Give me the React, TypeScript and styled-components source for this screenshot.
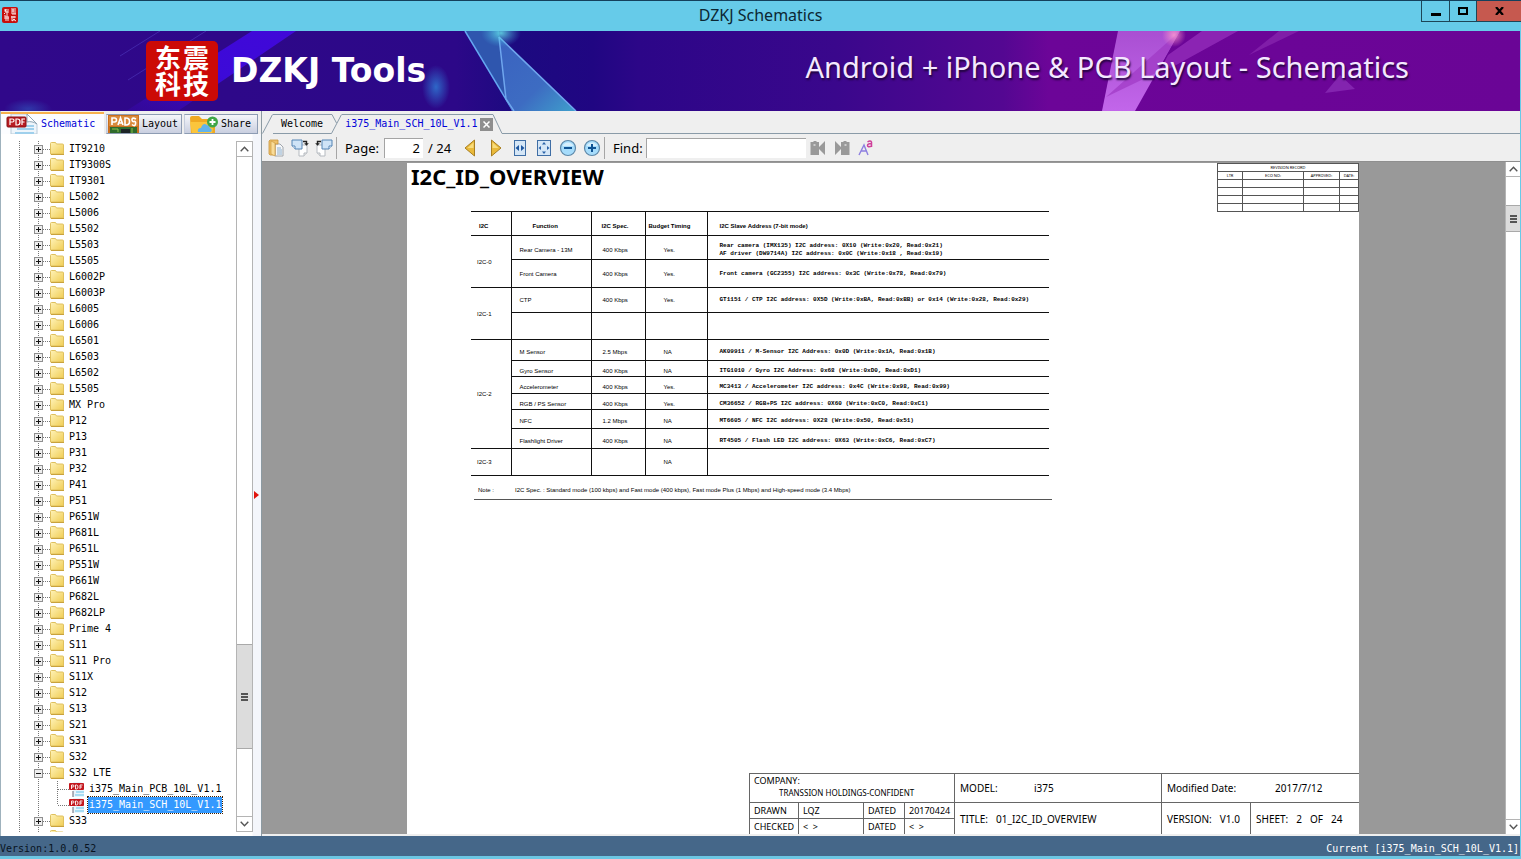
import React from "react";
import styled, { createGlobalStyle, css } from "styled-components";

const mono = `"DejaVu Sans Mono", "Liberation Mono", monospace`;
const ui = `"Noto Sans", "Open Sans", sans-serif`;
const sheet = `"Liberation Sans", Arial, sans-serif`;

const GlobalStyle = createGlobalStyle`
  *, *::before, *::after { box-sizing: border-box; }
  body { margin: 0; font-family: ${ui}; color: #000; background: #66cbe9; }
  button, input { font: inherit; color: inherit; padding: 0; margin: 0; border: 0; border-radius: 0; }
  button { background: none; }
  svg { display: block; flex: none; }
  ul { list-style: none; margin: 0; padding: 0; }
  h1, h2, p { margin: 0; }
`;

const Window = styled.div`
  display: flex;
  flex-direction: column;
  height: 100vh;
  border-top: 1px solid #14405c;
  border-bottom: 3px solid #6cc6e2;
`;

/* ---------- title bar ---------- */

const TitleBar = styled.header`
  display: grid;
  grid-template-columns: 1fr auto 1fr;
  height: 30px;
  flex: none;
  background: #66cbe9;
`;

const AppIcon = styled.div`
  padding: 6px 2px;
`;

const WindowTitle = styled.h1`
  font-size: 16px;
  line-height: 28px;
  font-weight: 400;
  color: #0c2733;
`;

const WindowControls = styled.div`
  display: flex;
  justify-self: end;
  height: 21px;
  border: 1px solid #1d4557;
  border-top: 0;
  border-right: 0;
`;

const WindowButton = styled.button<{ $wide?: boolean }>`
  display: flex;
  align-items: center;
  justify-content: center;
  width: ${(p) => (p.$wide ? 45 : 27)}px;
  background: ${(p) => (p.$wide ? "#c6594f" : "transparent")};

  & + & {
    border-left: 1px solid #1d4557;
  }
`;

/* ---------- banner ---------- */

const Banner = styled.div`
  position: relative;
  display: flex;
  align-items: center;
  justify-content: space-between;
  height: 80px;
  flex: none;
  margin-right: 1px;
  padding: 0 111px 0 146px;
  background: #30088a;
  overflow: hidden;
`;

const BannerArt = styled.svg`
  position: absolute;
  inset: 0;
  width: 100%;
  height: 100%;
`;

const Brand = styled.div`
  position: relative;
  display: flex;
  align-items: center;
  gap: 13px;
`;

const Seal = styled.div`
  display: grid;
  grid-template-columns: 28px 28px;
  grid-auto-rows: 26px;
  justify-content: center;
  width: 72px;
  height: 60px;
  padding: 3px 0;
  border-radius: 5px;
  background: #cc0a06;
  color: #fff;
  font-family: "Noto Sans CJK SC", sans-serif;
  font-size: 26px;
  line-height: 26px;
  font-weight: 700;
  text-align: center;
`;

const BrandName = styled.span`
  color: #fff;
  font-family: "DejaVu Sans", Verdana, sans-serif;
  font-size: 33px;
  line-height: 40px;
  font-weight: 700;
`;

const Tagline = styled.span`
  position: relative;
  color: #f4e8ff;
  font-size: 29px;
  line-height: 40px;
  margin-bottom: 8px;
  text-shadow: 1px 2px 2px #20043c;
`;

/* ---------- body ---------- */

const Body = styled.div`
  display: flex;
  flex: 1;
  min-height: 0;
  margin-right: 1px;
  background: #efefef;
`;

const Sidebar = styled.aside`
  display: flex;
  flex-direction: column;
  width: 262px;
  flex: none;
  padding-top: 1px;
  border-left: 1px solid #9fb2bd;
  border-right: 1px solid #8c9aa2;
`;

const SideTabs = styled.div`
  display: flex;
  align-items: flex-end;
  gap: 2px;
  height: 22px;
  flex: none;
`;

const SideTab = styled.button<{ $active?: boolean; $width: number }>`
  display: flex;
  align-items: center;
  gap: 3px;
  width: ${(p) => p.$width}px;
  height: 20px;
  padding-left: 1px;
  overflow: hidden;
  font-family: ${mono};
  font-size: 10px;
  line-height: 20px;
  border: 1px solid #8d9cb3;
  border-left-color: #c5cddc;
  background: linear-gradient(#f5f6fa, #c9cfe0);

  ${(p) =>
    p.$active &&
    css`
      height: 22px;
      padding-left: 5px;
      color: #0000d8;
      border: 0;
      border-top: 2px solid #f7b14c;
      background: #fcfdff;
    `}
`;

const SidePanel = styled.div`
  display: flex;
  flex: 1;
  min-height: 0;
  padding: 7px 0 4px;
  background: linear-gradient(90deg, #fff 251px, #f4f6fb 252px);
`;

const Tree = styled.ul`
  flex: 1;
  min-width: 0;
  overflow: hidden;
  font-family: ${mono};
  font-size: 10px;
  line-height: 16px;
`;

const TreeRow = styled.li`
  display: flex;
  height: 16px;
  padding-left: 18px;
`;

const TreeLabel = styled.button<{ $selected?: boolean }>`
  height: 16px;
  white-space: nowrap;
  margin-left: 3px;
  padding: 0 1px;
  ${(p) =>
    p.$selected &&
    css`
      color: #fff;
      background: #3399ff;
      outline: 1px dotted #402000;
    `}
`;

const Splitter = styled.div`
  display: flex;
  align-items: center;
  width: 8px;
  padding: 16px 0 0 1px;
`;

const Scrollbar = styled.div<{ $width: number }>`
  display: flex;
  flex-direction: column;
  width: ${(p) => p.$width}px;
  flex: none;
  background: #fff;
  border: 1px solid #b4b4b4;
  border-width: ${(p) => (p.$width > 15 ? "1px" : "0 0 0 1px")};
`;

const ArrowButton = styled.button`
  display: flex;
  align-items: center;
  justify-content: center;
  height: 15px;
  flex: none;
  background: #fff;

  &:first-child { border-bottom: 1px solid #b4b4b4; }
  &:last-child { border-top: 1px solid #b4b4b4; }
`;

const Track = styled.div<{ $grow: number }>`
  flex: ${(p) => p.$grow} 1 0;
`;

const Thumb = styled.div<{ $height: number }>`
  display: flex;
  align-items: center;
  justify-content: center;
  height: ${(p) => p.$height}px;
  flex: none;
  background: #dcdcdc;
  border: 1px solid #a9a9a9;
  border-width: 1px 0;
`;

/* ---------- document side ---------- */

const Content = styled.main`
  display: flex;
  flex-direction: column;
  flex: 1;
  min-width: 0;
`;

const DocTabs = styled.div`
  display: flex;
  align-items: flex-end;
  height: 23px;
  flex: none;
`;

const DocTab = styled.div<{ $active?: boolean }>`
  display: flex;
  align-items: center;
  gap: 2px;
  height: 20px;
  padding: 0 ${(p) => (p.$active ? 0 : 1)}px 0 ${(p) => (p.$active ? 3 : 8)}px;
  font-family: ${mono};
  font-size: 10px;
  line-height: 18px;
  color: ${(p) => (p.$active ? "#0000d8" : "#000")};
  border-top: 1px solid #8a9ba8;
  border-bottom: 1px solid ${(p) => (p.$active ? "transparent" : "#8a9ba8")};
`;

const TabRule = styled.div`
  flex: 1;
  border-bottom: 1px solid #8a9ba8;
`;

const CloseTab = styled.button`
  display: flex;
  align-items: center;
  justify-content: center;
  width: 13px;
  height: 13px;
  background: #8e8e8e;
`;

const Toolbar = styled.div`
  display: flex;
  align-items: center;
  height: 27px;
  flex: none;
  padding-left: 2px;
  font-size: 13px;
  line-height: 20px;
`;

const ToolButton = styled.button`
  display: flex;
  align-items: center;
  justify-content: center;
  width: 24px;
  height: 24px;
  flex: none;
`;

const Separator = styled.div`
  width: 1px;
  height: 22px;
  margin-right: 8px;
  background: #a6a6a6;
`;

const FieldLabel = styled.label<{ $width: number }>`
  width: ${(p) => p.$width}px;
`;

const Field = styled.input<{ $width: number; $right?: boolean }>`
  width: ${(p) => p.$width}px;
  height: 20px;
  background: #fff;
  border-top: 1px solid #a4a4a4;
  border-left: 1px solid #a4a4a4;
  padding: 0 3px;
  text-align: ${(p) => (p.$right ? "right" : "left")};
`;

const PageCount = styled.span`
  width: 35px;
  padding-left: 5px;
  white-space: nowrap;
`;

const Pager = styled.div`
  display: flex;
  gap: 2px;
`;

const Viewer = styled.div`
  display: flex;
  flex: 1;
  min-height: 0;
  margin-bottom: 2px;
  border-top: 1px solid #8f8f8f;
  background: #999;
`;

const Canvas = styled.div`
  display: flex;
  justify-content: center;
  flex: 1;
  min-width: 0;
  padding: 1px 1px 0 0;
`;

const Paper = styled.article`
  display: flex;
  flex-direction: column;
  width: 100%;
  max-width: 952px;
  overflow: hidden;
  background: #fff;
`;

const PaperHead = styled.div`
  display: flex;
  justify-content: space-between;
  align-items: flex-start;
  height: 48px;
  flex: none;
`;

const SheetTitle = styled.h2`
  padding-left: 4px;
  font-size: 22px;
  line-height: 26px;
  font-weight: 700;
`;

const RevisionTable = styled.table`
  width: 142px;
  table-layout: fixed;
  border-collapse: collapse;
  font-size: 4px;
  line-height: 6px;
  text-align: center;

  th, td {
    height: 8px;
    padding: 0;
    font-weight: 400;
    border: 1px solid #555;
  }
`;

const I2CTable = styled.table`
  width: 578px;
  margin-left: 64px;
  flex: none;
  table-layout: fixed;
  border-collapse: collapse;
  font-family: ${sheet};
  font-size: 6px;
  line-height: 8px;
  color: #000;
`;

const SheetRow = styled.tr<{ $height: number }>`
  height: ${(p) => p.$height}px;
`;

const SheetCell = styled.td<{ $indent: number; $low?: boolean }>`
  padding: ${(p) => (p.$low ? 4 : 0)}px 0 0 ${(p) => p.$indent}px;
  text-align: left;
  white-space: nowrap;
  border: 1px solid #111;
  border-right: 0;
`;

const GroupCell = styled(SheetCell)<{ $heading?: boolean }>`
  font-weight: ${(p) => (p.$heading ? 700 : 400)};
  border-left: 0;
`;

const AddressCell = styled(SheetCell)`
  font-family: "Liberation Mono", monospace;
  font-weight: 700;
  white-space: pre;
`;

const SheetNote = styled.p`
  display: flex;
  width: 578px;
  height: 24px;
  flex: none;
  margin-left: 67px;
  padding-left: 4px;
  font-family: ${sheet};
  font-size: 6px;
  line-height: 28px;
  border-bottom: 1px solid #555;
`;

const NoteTag = styled.span`
  width: 37px;
`;

const TitleBlock = styled.div`
  display: grid;
  grid-template-columns: 204px 207px 1fr;
  height: 61px;
  flex: none;
  width: 610px;
  margin: auto 0 0 auto;
  border: 1px solid #666;
  border-width: 1px 0 0 1px;
  font-size: 10px;
  line-height: 12px;
`;

const BlockColumn = styled.div`
  display: grid;
  grid-template-rows: 28px 1fr;
  min-width: 0;

  & + & { border-left: 1px solid #666; }
`;

const BlockRow = styled.div<{ $cols: string }>`
  display: grid;
  grid-template-columns: ${(p) => p.$cols};
  min-width: 0;
  white-space: nowrap;

  & + & { border-top: 1px solid #666; }
`;

const BlockCell = styled.span<{ $ruled?: boolean; $small?: boolean }>`
  display: flex;
  align-items: center;
  gap: 8px;
  padding-left: ${(p) => (p.$small ? 4 : 5)}px;
  font-size: ${(p) => (p.$small ? 9 : 10)}px;
  border-left: ${(p) => (p.$ruled ? "1px solid #666" : "0")};
`;

const Company = styled.div`
  padding: 1px 0 0 4px;
  font-size: 9px;
`;

const CompanyName = styled.p`
  padding-left: 25px;
  font-size: 8px;
  line-height: 11px;
`;

const Stack = styled.div`
  display: grid;
  grid-template-rows: 15px 1fr;
  border-top: 1px solid #666;
`;

/* ---------- status bar ---------- */

const StatusBar = styled.footer`
  display: flex;
  justify-content: space-between;
  height: 20px;
  flex: none;
  margin-right: 1px;
  padding-top: 5px;
  font-family: ${mono};
  font-size: 10px;
  line-height: 15px;
  background: #456789;
  color: #08131e;
`;

const CurrentFile = styled.span`
  color: #fff;
  padding-right: 1px;
`;

/* ---------- drawings ---------- */

const SealIcon = () => (
  <svg width="16" height="16" viewBox="0 0 16 16" aria-hidden="true">
    <rect width="16" height="16" rx="2" fill="#c80f0c" />
    <path
      d="M2 3h5M4 2l-1 3h4M5 4v4M2 6l1 1M9 2h5M9 4h5M11 2v3M9 6h5M10 7h4M2 9h4M4 9v5M2 11h5M6 9v5M9 10h5M10 9v5M12 9v2M11 12l3 2M13 12l-3 2"
      stroke="#fff"
      strokeWidth=".9"
      fill="none"
    />
  </svg>
);

const PdfIcon = ({ big }: { big?: boolean }) => (
  <svg width={big ? 32 : 16} height={big ? 20 : 16} viewBox={big ? "0 0 32 20" : "0 0 16 16"} aria-hidden="true">
    {big ? (
      <>
        <path d="M5 0h16l10 10v10H5z" fill="#eef5fb" stroke="#b9cbd8" />
        <path d="M21 0v8c3-1 7 0 10 2z" fill="#fff" stroke="#8fa5b3" />
        <path d="M11 15h17M9 19h19M20 12h8" stroke="#9fd0ec" strokeWidth="2" />
        <rect x="1" y="3" width="19" height="10" rx="1" fill="#b81c22" stroke="#8a1015" />
        <path d="M4 11V5h2.500q1.500 0 1.500 1.500T6.500 8H4M10 5v6h1.500q2.500 0 2.500-3t-2.500-3zM16 11V5h3M16 8h2.500" stroke="#fff" fill="none" strokeWidth="1.200" />
      </>
    ) : (
      <>
        <path d="M4 1h8l3 3v12H4z" fill="#e8f4fc" />
        <path d="M4 10v6" stroke="#667" />
        <path d="M7 11h8M6 14h9" stroke="#a6dcf3" strokeWidth="2" />
        <rect x="0" y="2" width="15" height="7" rx="1" fill="#c3161d" />
        <path d="M2.500 8V4h1.500q1 0 1 1T4 6H2.500M6.500 4v4h1q1.500 0 1.500-2T7.500 4zM11 8V4h2.500M11 6h2" stroke="#fff" fill="none" strokeWidth=".9" />
      </>
    )}
  </svg>
);

const PadsIcon = () => (
  <svg width="31" height="19" viewBox="0 0 31 19" aria-hidden="true">
    <rect width="31" height="19" fill="#c96f1d" />
    <rect x="1" y="1" width="29" height="10" fill="#d98a3c" />
    <rect x="2" y="12" width="27" height="7" fill="#2f6b2c" />
    <path d="M4 14h6v3M14 16h4M24 13v5" stroke="#8cc04a" fill="none" />
    <rect x="13" y="14" width="9" height="5" fill="#1c2426" />
    <path d="M4 10V3h2.500q2 0 2 2t-2 2H4M10 10l2.500-7L15 10M11 8h3M17 3v7h1q3.500 0 3.500-3.500T18 3zM28 4q-4-2-4 .500t2 2T27.500 9 24 9.500" stroke="#fff" strokeWidth="1.600" fill="none" />
  </svg>
);

const ShareIcon = () => (
  <svg width="32" height="19" viewBox="0 0 32 19" aria-hidden="true">
    <path d="M4 3q0-2 2-2h7l3 3h11q2 0 2 2v13H5z" fill="#f0a922" />
    <path d="M4 7h24l-2 12H6z" fill="#fbc53c" />
    <path d="M12 17q-1-4 3-4 2-6 6-3 2 0 3 3 3 1 1 4z" fill="#62b3ea" />
    <circle cx="26.500" cy="7" r="5.500" fill="#3fa648" />
    <path d="M26.500 4v6M23.500 7h6" stroke="#fff" strokeWidth="1.800" />
  </svg>
);

const FolderIcon = () => (
  <svg width="15" height="16" viewBox="0 0 15 16" aria-hidden="true">
    <defs>
      <linearGradient id="folder" x1="0" y1="0" x2="1" y2="1">
        <stop offset="0" stopColor="#fff3b8" />
        <stop offset="1" stopColor="#f0cd55" />
      </linearGradient>
    </defs>
    <path d="M.5 2.500q0-1 1-1h4l1 1.500h6q1 0 1 1v9H.5z" fill="url(#folder)" stroke="#dfc05e" />
    <path d="M1 13.500h13" stroke="#c9a23c" />
  </svg>
);

const Branch = ({ open }: { open?: boolean }) => (
  <svg width="31" height="16" viewBox="0 0 31 16" aria-hidden="true" shapeRendering="crispEdges">
    <path d="M.5 0v16M19.500 0v16" stroke="#777" strokeDasharray="1 1" />
    <path d="M24 8.500h7" stroke="#777" strokeDasharray="1 1" />
    <rect x="15.500" y="4.500" width="8" height="8" fill="#eee" stroke="#8f8f8f" />
    <path d={open ? "M17 8.500h5" : "M17 8.500h5M19.500 6v5"} stroke="#111" />
  </svg>
);

const LeafBranch = ({ last }: { last?: boolean }) => (
  <svg width="50" height="16" viewBox="0 0 50 16" aria-hidden="true" shapeRendering="crispEdges">
    <path d={`M.5 0v16M19.500 0v16M38.500 0v${last ? 8 : 16}M39 8.500h11`} stroke="#777" strokeDasharray="1 1" fill="none" />
  </svg>
);

const Chevron = ({ down }: { down?: boolean }) => (
  <svg width="9" height="6" viewBox="0 0 9 6" aria-hidden="true">
    <path d={down ? "M.7.7l3.800 4 3.800-4" : "M.7 5.300l3.800-4 3.800 4"} stroke="#555" strokeWidth="1.400" fill="none" />
  </svg>
);

const Grip = () => (
  <svg width="7" height="8" viewBox="0 0 7 8" aria-hidden="true" shapeRendering="crispEdges">
    <path d="M0 1h7M0 4h7M0 7h7" stroke="#555" strokeWidth="2" />
  </svg>
);

const Svg18 = ({ children }: { children: React.ReactNode }) => (
  <svg width="18" height="18" viewBox="0 0 18 18" aria-hidden="true">
    {children}
  </svg>
);

const OpenIcon = () => (
  <Svg18>
    <path d="M8 5h5l3 3v9H8z" fill="#f7f7f7" stroke="#a0a6ad" />
    <path d="M10 9h4M10 11h5M10 13h5M10 15h5" stroke="#6e9cc4" strokeWidth=".8" />
    <path d="M2 2l1-1h8v4H8v11H3l-1-1z" fill="#eec069" stroke="#c8963a" strokeWidth=".8" />
    <path d="M4 2l4 2v13l-4-2z" fill="#f9dc98" stroke="#c8963a" strokeWidth=".6" />
  </Svg18>
);

const RotateIcon = ({ left }: { left?: boolean }) => (
  <Svg18>
    <g transform={left ? "matrix(-1 0 0 1 18 0)" : undefined}>
      <path d="M8 6h8v8l-3 3H8z" fill="#fff" stroke="#b5bac0" />
      <path d="M13 17v-3h3" fill="#e6e6e6" stroke="#b5bac0" />
      <path d="M1 1h10v9H4l-3-3z" fill="#cfe4f7" stroke="#5585b5" />
      <path d="M1 7h3v3" fill="#fff" stroke="#5585b5" />
      <path d="M12 2.500h3.500V5" stroke="#222" fill="none" strokeWidth="1.400" />
      <path d="M13.200 4.300h4.600l-2.300 2.400z" fill="#222" />
    </g>
  </Svg18>
);

const GoldArrow = ({ right }: { right?: boolean }) => (
  <Svg18>
    <path
      d={right ? "M4.500 1v16L14 9z" : "M13.500 1v16L4 9z"}
      fill="#e9b93a"
      stroke="#a87f22"
      strokeLinejoin="round"
    />
    <path d={right ? "M5.500 3.500v5.500h6z" : "M12.500 3.500v5.500h-6z"} fill="#f8dc7c" />
  </Svg18>
);

const FitIcon = ({ page }: { page?: boolean }) => (
  <Svg18>
    {page ? (
      <>
        <rect x="2.500" y="1.500" width="13" height="15" fill="#d5e6f6" stroke="#3f6ea5" />
        <path d="M9 3l2 2.500H7zM9 15l2-2.500H7zM3.500 9L6 7v4zM14.500 9L12 7v4z" fill="#2a62a8" />
      </>
    ) : (
      <>
        <rect x="3.500" y="1.500" width="11" height="15" fill="#d5e6f6" stroke="#3f6ea5" />
        <path d="M4.500 9L8 6v6zM13.500 9L10 6v6z" fill="#1d56a0" />
      </>
    )}
  </Svg18>
);

const ZoomIcon = ({ plus }: { plus?: boolean }) => (
  <Svg18>
    <circle cx="9" cy="9" r="7.500" fill="#a6dcfb" stroke="#5c87a8" strokeWidth="1.200" />
    <path d="M3.500 7a6 6 0 0 1 11 0z" fill="#d6effd" />
    <path d={plus ? "M5 9h8M9 5v8" : "M5 9h8"} stroke="#0f5394" strokeWidth="2" />
  </Svg18>
);

const FindIcon = ({ next }: { next?: boolean }) => (
  <Svg18>
    <g transform={next ? "matrix(-1 0 0 1 18 0)" : undefined}>
      <path d="M1.500 3h2.500l1-1h2l1 1h2v5l6-6v14l-6-6v6H1.500z" fill="#999" />
      <path d="M4.500 5h2v2h-2z" fill="#efefef" opacity=".6" />
    </g>
  </Svg18>
);

const CaseIcon = () => (
  <Svg18>
    <path d="M2 16L7 6l4 10M4 12h6" stroke="#8d7fe0" strokeWidth="1.400" fill="none" />
    <path d="M10.500 3q3-2 4 0v5M14.500 4.500q-4 0-4 2t4 .8" stroke="#cf3f9a" strokeWidth="1.500" fill="none" />
  </Svg18>
);

const BannerDrawing = () => (
  <BannerArt viewBox="0 0 1520 80" preserveAspectRatio="none" aria-hidden="true">
    <defs>
      <linearGradient id="sky">
        <stop offset="0" stopColor="#30088a" />
        <stop offset=".3" stopColor="#2c0888" />
        <stop offset=".34" stopColor="#1c0a80" />
        <stop offset=".39" stopColor="#200682" />
        <stop offset=".42" stopColor="#2c0688" />
        <stop offset=".55" stopColor="#3a078c" />
        <stop offset=".66" stopColor="#540792" />
        <stop offset=".69" stopColor="#6c0598" />
        <stop offset="1" stopColor="#6a0596" />
      </linearGradient>
      <linearGradient id="beam" x1="1" y1="0" x2="0" y2="1">
        <stop offset="0" stopColor="#4108d8" />
        <stop offset=".5" stopColor="#3c0ad8" />
        <stop offset="1" stopColor="#3b08b4" stopOpacity=".3" />
      </linearGradient>
      <linearGradient id="shard" x1="0" y1="0" x2="1" y2="1">
        <stop offset="0" stopColor="#3a62c0" />
        <stop offset=".6" stopColor="#3d6cc2" />
        <stop offset="1" stopColor="#3fa0cc" />
      </linearGradient>
      <linearGradient id="pink" x1="0" y1="0" x2="0" y2="1">
        <stop offset="0" stopColor="#a94fd2" />
        <stop offset="1" stopColor="#c266ea" />
      </linearGradient>
      <radialGradient id="glow">
        <stop offset="0" stopColor="#2f7fd8" stopOpacity=".8" />
        <stop offset="1" stopColor="#2f7fd8" stopOpacity="0" />
      </radialGradient>
      <radialGradient id="cyan">
        <stop offset="0" stopColor="#68f0f0" stopOpacity=".8" />
        <stop offset="1" stopColor="#40b0e0" stopOpacity="0" />
      </radialGradient>
      <radialGradient id="spark">
        <stop offset="0" stopColor="#ff9fd0" stopOpacity=".8" />
        <stop offset="1" stopColor="#ff8fc8" stopOpacity="0" />
      </radialGradient>
    </defs>
    <rect width="1520" height="80" fill="url(#sky)" />
    <path d="M252 0h44L178 80h-52z" fill="url(#beam)" />
    <path d="M206 0L128 49M160 0l-40 25" stroke="#5b4cd0" strokeOpacity=".45" />
    <ellipse cx="436" cy="56" rx="14" ry="22" fill="url(#glow)" />
    <ellipse cx="28" cy="78" rx="24" ry="10" fill="url(#glow)" opacity=".5" />
    <path d="M465 0h34l7 66-6-8z" fill="#2f56ae" />
    <path d="M465 0l48 80" stroke="#65a8f2" strokeWidth="1.500" />
    <path d="M499 6l77 74h-64l-6-12z" fill="url(#shard)" />
    <path d="M499 6l77 74M499 6l7 62 8 12" stroke="#6fa6ee" strokeWidth="1.500" fill="none" />
    <ellipse cx="501" cy="2" rx="20" ry="14" fill="url(#cyan)" />
    <path d="M1118 0h62l-45 80h-33z" fill="url(#pink)" />
    <path d="M1180 0l-24 42-50 24M1202 0h36l-80 44 10-20z" fill="#9c35c2" opacity=".65" />
    <path d="M1279 0h20l-50 24z" fill="#8d2db4" opacity=".6" />
    <path d="M1340 44l15 14-30 4z" fill="#8a2cb5" opacity=".8" />
    <circle cx="1174" cy="4" r="12" fill="url(#spark)" />
  </BannerArt>
);

/* ---------- data ---------- */

const folders = [
  "IT9210", "IT9300S", "IT9301", "L5002", "L5006", "L5502", "L5503", "L5505", "L6002P", "L6003P", "L6005",
  "L6006", "L6501", "L6503", "L6502", "L5505", "MX Pro", "P12", "P13", "P31", "P32", "P41", "P51", "P651W",
  "P681L", "P651L", "P551W", "P661W", "P682L", "P682LP", "Prime 4", "S11", "S11 Pro", "S11X", "S12", "S13",
  "S21", "S31", "S32",
];

type Row = {
  group?: [string, number];
  height: number;
  low?: boolean;
  fn?: string;
  spec?: string;
  timing?: string;
  address?: string;
};

const rows: Row[] = [
  { group: ["I2C-0", 2], height: 24, low: true, fn: "Rear Camera - 13M", spec: "400 Kbps", timing: "Yes.",
    address: "Rear camera (IMX135) I2C address: 0X10 (Write:0x20, Read:0x21)\nAF driver (DW9714A) I2C address: 0x0C (Write:0x18 , Read:0x19)" },
  { height: 28, fn: "Front Camera", spec: "400 Kbps", timing: "Yes.", address: "Front camera (GC2355) I2C address: 0x3C (Write:0x78, Read:0x79)" },
  { group: ["I2C-1", 2], height: 25, fn: "CTP", spec: "400 Kbps", timing: "Yes.",
    address: "GT1151 / CTP I2C address: 0X5D (Write:0xBA, Read:0xBB) or 0x14 (Write:0x28, Read:0x29)" },
  { height: 27 },
  { group: ["I2C-2", 6], height: 21, low: true, fn: "M Sensor", spec: "2.5 Mbps", timing: "NA", address: "AK09911 / M-Sensor I2C Address: 0x0D (Write:0x1A, Read:0x1B)" },
  { height: 16, low: true, fn: "Gyro Sensor", spec: "400 Kbps", timing: "NA", address: "ITG1010 / Gyro I2C Address: 0x68 (Write:0xD0, Read:0xD1)" },
  { height: 17, low: true, fn: "Accelerometer", spec: "400 Kbps", timing: "Yes.", address: "MC3413 / Accelerometer I2C address: 0x4C (Write:0x98, Read:0x99)" },
  { height: 16, low: true, fn: "RGB / PS Sensor", spec: "400 Kbps", timing: "Yes.", address: "CM36652 / RGB+PS I2C address: 0X60 (Write:0xC0, Read:0xC1)" },
  { height: 19, low: true, fn: "NFC", spec: "1.2 Mbps", timing: "NA", address: "MT6605 / NFC I2C address: 0X28 (Write:0x50, Read:0x51)" },
  { height: 20, low: true, fn: "Flashlight Driver", spec: "400 Kbps", timing: "NA", address: "RT4505 / Flash LED I2C address: 0X63 (Write:0xC6, Read:0xC7)" },
  { group: ["I2C-3", 1], height: 27, timing: "NA" },
];

const Folder = ({ name, open }: { name: string; open?: boolean }) => (
  <TreeRow>
    <Branch open={open} />
    <FolderIcon />
    <TreeLabel type="button">{name}</TreeLabel>
  </TreeRow>
);

const Leaf = ({ name, selected }: { name: string; selected?: boolean }) => (
  <TreeRow>
    <LeafBranch last={selected} />
    <PdfIcon />
    <TreeLabel type="button" $selected={selected}>{name}</TreeLabel>
  </TreeRow>
);

export default function App() {
  return (
    <>
      <GlobalStyle />
      <Window>
        <TitleBar>
          <AppIcon><SealIcon /></AppIcon>
          <WindowTitle>DZKJ Schematics</WindowTitle>
          <WindowControls>
            <WindowButton type="button" aria-label="Minimize">
              <svg width="10" height="12" viewBox="0 0 10 12"><path d="M0 9.500h10" stroke="#000" strokeWidth="3" /></svg>
            </WindowButton>
            <WindowButton type="button" aria-label="Maximize">
              <svg width="10" height="8" viewBox="0 0 10 8"><rect x="1" y="1" width="8" height="6" fill="none" stroke="#000" strokeWidth="2" /></svg>
            </WindowButton>
            <WindowButton type="button" aria-label="Close" $wide>
              <svg width="9" height="8" viewBox="0 0 9 8"><path d="M1 0l7 8M8 0L1 8" stroke="#000" strokeWidth="2.200" /></svg>
            </WindowButton>
          </WindowControls>
        </TitleBar>

        <Banner>
          <BannerDrawing />
          <Brand>
            <Seal>
              <span>东</span>
              <span>震</span>
              <span>科</span>
              <span>技</span>
            </Seal>
            <BrandName>DZKJ Tools</BrandName>
          </Brand>
          <Tagline>Android + iPhone &amp; PCB Layout - Schematics</Tagline>
        </Banner>

        <Body>
          <Sidebar>
            <SideTabs>
              <SideTab type="button" $active $width={103}><PdfIcon big />Schematic</SideTab>
              <SideTab type="button" $width={76}><PadsIcon />Layout</SideTab>
              <SideTab type="button" $width={74}><ShareIcon />Share</SideTab>
            </SideTabs>
            <SidePanel>
              <Tree>
                {folders.map((name, i) => <Folder key={i} name={name} />)}
                <Folder name="S32 LTE" open />
                <Leaf name="i375_Main_PCB_10L_V1.1" />
                <Leaf name="i375_Main_SCH_10L_V1.1" selected />
                <Folder name="S33" />
                <Folder name="" />
              </Tree>
              <Scrollbar $width={17}>
                <ArrowButton type="button" aria-label="Scroll up"><Chevron /></ArrowButton>
                <Track $grow={487} />
                <Thumb $height={105}><Grip /></Thumb>
                <Track $grow={67} />
                <ArrowButton type="button" aria-label="Scroll down"><Chevron down /></ArrowButton>
              </Scrollbar>
              <Splitter>
                <svg width="5" height="8" viewBox="0 0 5 8" aria-hidden="true"><path d="M0 0l5 4-5 4z" fill="#e0140c" /></svg>
              </Splitter>
            </SidePanel>
          </Sidebar>

          <Content>
            <DocTabs>
              <svg width="11" height="20" viewBox="0 0 11 20" aria-hidden="true">
                <path d="M.5 19.500L10.500.5" stroke="#8a9ba8" />
              </svg>
              <DocTab>Welcome</DocTab>
              <svg width="18" height="20" viewBox="0 0 18 20" aria-hidden="true">
                <path d="M0 .5h8l4.500 8.500M0 19.500h7.500l10-19" stroke="#8a9ba8" fill="none" />
              </svg>
              <DocTab $active>
                i375_Main_SCH_10L_V1.1
                <CloseTab type="button" aria-label="Close tab">
                  <svg width="7" height="7" viewBox="0 0 7 7"><path d="M.5.5l6 6M6.500.5l-6 6" stroke="#fff" strokeWidth="1.500" /></svg>
                </CloseTab>
              </DocTab>
              <svg width="10" height="20" viewBox="0 0 10 20" aria-hidden="true">
                <path d="M0 .5l9 19h1" stroke="#8a9ba8" fill="none" />
              </svg>
              <TabRule />
            </DocTabs>

            <Toolbar>
              <ToolButton type="button" aria-label="Open"><OpenIcon /></ToolButton>
              <ToolButton type="button" aria-label="Rotate right"><RotateIcon /></ToolButton>
              <ToolButton type="button" aria-label="Rotate left"><RotateIcon left /></ToolButton>
              <Separator />
              <FieldLabel htmlFor="page" $width={39}>Page:</FieldLabel>
              <Field id="page" $width={39} $right defaultValue="2" />
              <PageCount>/ 24</PageCount>
              <Pager>
                <ToolButton type="button" aria-label="Previous page"><GoldArrow /></ToolButton>
                <ToolButton type="button" aria-label="Next page"><GoldArrow right /></ToolButton>
              </Pager>
              <ToolButton type="button" aria-label="Fit width"><FitIcon /></ToolButton>
              <ToolButton type="button" aria-label="Fit page"><FitIcon page /></ToolButton>
              <ToolButton type="button" aria-label="Zoom out"><ZoomIcon /></ToolButton>
              <ToolButton type="button" aria-label="Zoom in"><ZoomIcon plus /></ToolButton>
              <Separator />
              <FieldLabel htmlFor="find" $width={33}>Find:</FieldLabel>
              <Field id="find" $width={160} />
              <ToolButton type="button" aria-label="Find previous"><FindIcon /></ToolButton>
              <ToolButton type="button" aria-label="Find next"><FindIcon next /></ToolButton>
              <ToolButton type="button" aria-label="Match case"><CaseIcon /></ToolButton>
            </Toolbar>

            <Viewer>
              <Canvas>
                <Paper>
                  <PaperHead>
                    <SheetTitle>I2C_ID_OVERVIEW</SheetTitle>
                    <RevisionTable>
                      <colgroup>
                        <col width="25" />
                        <col width="61" />
                        <col width="36" />
                        <col />
                      </colgroup>
                      <tbody>
                        <tr><th colSpan={4}>REVISION RECORD</th></tr>
                        <tr><th>LTR</th><th>ECO NO:</th><th>APPROVED:</th><th>DATE:</th></tr>
                        {[0, 1, 2, 3].map((n) => <tr key={n}><td /><td /><td /><td /></tr>)}
                      </tbody>
                    </RevisionTable>
                  </PaperHead>

                  <I2CTable>
                    <colgroup>
                      <col width="40" />
                      <col width="80" />
                      <col width="54" />
                      <col width="62" />
                      <col />
                    </colgroup>
                    <tbody>
                      <SheetRow $height={24}>
                        <GroupCell as="th" $indent={8} $low $heading>I2C</GroupCell>
                        <SheetCell as="th" $indent={21} $low>Function</SheetCell>
                        <SheetCell as="th" $indent={10} $low>I2C Spec.</SheetCell>
                        <SheetCell as="th" $indent={3} $low>Budget Timing</SheetCell>
                        <SheetCell as="th" $indent={12} $low>I2C Slave Address (7-bit mode)</SheetCell>
                      </SheetRow>
                      {rows.map((r, i) => (
                        <SheetRow key={i} $height={r.height}>
                          {r.group && <GroupCell as="th" rowSpan={r.group[1]} $indent={6}>{r.group[0]}</GroupCell>}
                          <SheetCell $indent={8} $low={r.low}>{r.fn}</SheetCell>
                          <SheetCell $indent={11} $low={r.low}>{r.spec}</SheetCell>
                          <SheetCell $indent={18} $low={r.low}>{r.timing}</SheetCell>
                          <AddressCell $indent={12} $low={r.low}>{r.address}</AddressCell>
                        </SheetRow>
                      ))}
                    </tbody>
                  </I2CTable>
                  <SheetNote>
                    <NoteTag>Note :</NoteTag>
                    I2C Spec. : Standard mode (100 kbps) and Fast mode (400 kbps), Fast mode Plus (1 Mbps) and High-speed mode (3.4 Mbps)
                  </SheetNote>

                  <TitleBlock>
                    <BlockColumn>
                      <Company>
                        <p>COMPANY:</p>
                        <CompanyName>TRANSSION HOLDINGS-CONFIDENT</CompanyName>
                      </Company>
                      <Stack>
                        <BlockRow $cols="48px 65px 41px 1fr">
                          <BlockCell $small>DRAWN</BlockCell>
                          <BlockCell $small $ruled>LQZ</BlockCell>
                          <BlockCell $small $ruled>DATED</BlockCell>
                          <BlockCell $small $ruled>20170424</BlockCell>
                        </BlockRow>
                        <BlockRow $cols="48px 65px 41px 1fr">
                          <BlockCell $small>CHECKED</BlockCell>
                          <BlockCell $small $ruled>&lt;&nbsp; &gt;</BlockCell>
                          <BlockCell $small $ruled>DATED</BlockCell>
                          <BlockCell $small $ruled>&lt;&nbsp; &gt;</BlockCell>
                        </BlockRow>
                      </Stack>
                    </BlockColumn>
                    <BlockColumn>
                      <BlockRow $cols="74px 1fr"><BlockCell>MODEL:</BlockCell><BlockCell>i375</BlockCell></BlockRow>
                      <BlockRow $cols="1fr"><BlockCell>TITLE:<span>01_I2C_ID_OVERVIEW</span></BlockCell></BlockRow>
                    </BlockColumn>
                    <BlockColumn>
                      <BlockRow $cols="108px 1fr"><BlockCell>Modified Date:</BlockCell><BlockCell>2017/7/12</BlockCell></BlockRow>
                      <BlockRow $cols="88px 1fr">
                        <BlockCell>VERSION:<span>V1.0</span></BlockCell>
                        <BlockCell $ruled>SHEET:<span>2</span><span>OF</span><span>24</span></BlockCell>
                      </BlockRow>
                    </BlockColumn>
                  </TitleBlock>
                </Paper>
              </Canvas>
              <Scrollbar $width={15}>
                <ArrowButton type="button" aria-label="Scroll up"><Chevron /></ArrowButton>
                <Track $grow={28} />
                <Thumb $height={27}><Grip /></Thumb>
                <Track $grow={587} />
                <ArrowButton type="button" aria-label="Scroll down"><Chevron down /></ArrowButton>
              </Scrollbar>
            </Viewer>
          </Content>
        </Body>

        <StatusBar>
          <span>Version:1.0.0.52</span>
          <CurrentFile>Current [i375_Main_SCH_10L_V1.1]</CurrentFile>
        </StatusBar>
      </Window>
    </>
  );
}
